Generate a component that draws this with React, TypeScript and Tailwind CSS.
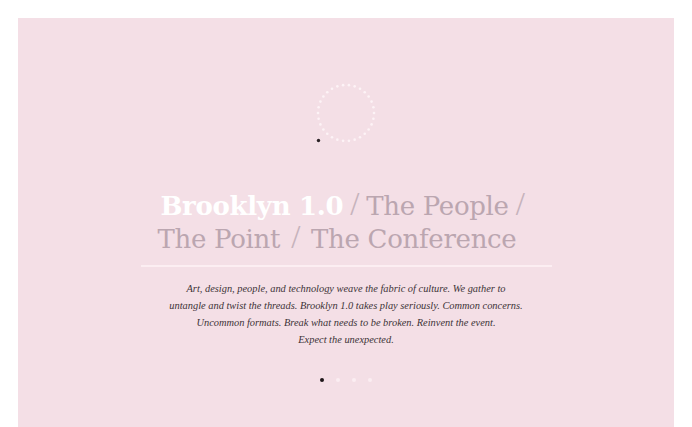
import React from "react";

const RING_DOTS = 30;

const Spinner: React.FC = () => {
    const dots = Array.from({ length: RING_DOTS }, (_, i) => {
        const a = (i / RING_DOTS) * Math.PI * 2;
        return { x: 36 + Math.cos(a) * 28, y: 36 + Math.sin(a) * 28 };
    });
    return (
        <svg width="72" height="72" viewBox="0 0 72 72" className="block">
            {dots.map((d, i) => (
                <circle key={i} cx={d.x} cy={d.y} r="1.3" fill="#fdf3f6" />
            ))}
            <circle cx="8.5" cy="63.5" r="1.7" fill="#2b2226" />
        </svg>
    );
};

const Slash: React.FC<{ wide?: boolean }> = ({ wide }) => (
    <span
        className={
            wide
                ? "font-['Liberation_Serif',serif] font-normal text-[33px] leading-none text-[#c6b3bc] mx-[11px]"
                : "font-['Liberation_Serif',serif] font-normal text-[33px] leading-none text-[#c6b3bc] mx-[7px]"
        }
    >
        /
    </span>
);

export default function App() {
    return (
        <div className="w-[692px] h-[427px] bg-white overflow-hidden pt-[18px] px-[18px]">
            <div className="h-[409px] bg-[#f4dfe6] flex flex-col items-center">
                {/* Loader */}
                <div className="mt-[59px]">
                    <Spinner />
                </div>

                {/* Title */}
                <h1 className="mt-[39px] text-center text-[26px] leading-[33px] text-[#bba6b0] font-['DejaVu_Serif',serif] tracking-[-0.3px]">
                    <span className="block h-[33px]">
                        <span className="font-bold text-white">Brooklyn 1.0</span>
                        <Slash />
                        The People
                        <Slash />
                    </span>
                    <span className="block h-[33px] pr-[18px]">
                        The Point
                        <Slash wide />
                        The Conference
                    </span>
                </h1>

                {/* Divider */}
                <div className="mt-[11px] w-[411px] h-[2px] bg-[#fceef2]" />

                {/* Intro */}
                <p className="mt-[13px] text-center italic text-[10.4px] leading-[17px] text-[#3d3337] font-['Liberation_Serif',serif]">
                    <span className="block">Art, design, people, and technology weave the fabric of culture. We gather to</span>
                    <span className="block">untangle and twist the threads. Brooklyn 1.0 takes play seriously. Common concerns.</span>
                    <span className="block">Uncommon formats. Break what needs to be broken. Reinvent the event.</span>
                    <span className="block">Expect the unexpected.</span>
                </p>

                {/* Pager */}
                <div className="mt-[30px] flex items-center gap-[12px] -ml-[1px]">
                    <span className="w-[4px] h-[4px] rounded-full bg-[#1d1619]" />
                    <span className="w-[4px] h-[4px] rounded-full bg-[#fbeef2]" />
                    <span className="w-[4px] h-[4px] rounded-full bg-[#fbeef2]" />
                    <span className="w-[4px] h-[4px] rounded-full bg-[#fbeef2]" />
                </div>
            </div>
        </div>
    );
}
